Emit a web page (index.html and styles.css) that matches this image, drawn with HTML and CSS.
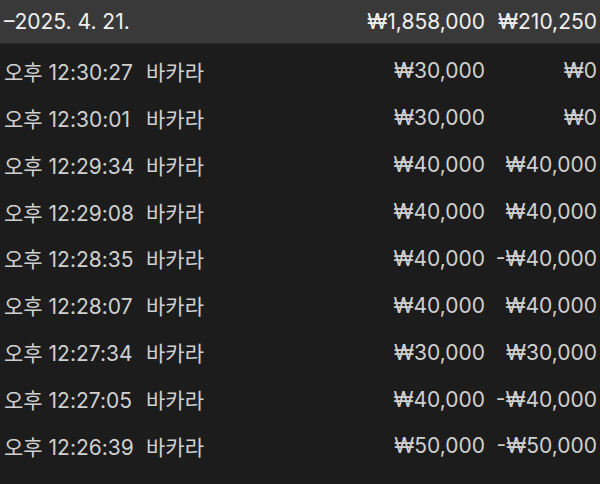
FILE: index.html
```html
<!DOCTYPE html>
<html lang="ko">
<head>
<meta charset="utf-8">
<link rel="stylesheet" href="styles.css">
</head>
<body>
<div class="list">
  <div class="head">
    <span class="date">–2025. 4. 21.</span>
    <span class="amt">₩1,858,000</span>
    <span class="res">₩210,250</span>
  </div>
  <div class="row"><span class="time">오후 12:30:27</span><span class="game">바카라</span><span class="amt">₩30,000</span><span class="res">₩0</span></div>
  <div class="row"><span class="time">오후 12:30:01</span><span class="game">바카라</span><span class="amt">₩30,000</span><span class="res">₩0</span></div>
  <div class="row"><span class="time">오후 12:29:34</span><span class="game">바카라</span><span class="amt">₩40,000</span><span class="res">₩40,000</span></div>
  <div class="row"><span class="time">오후 12:29:08</span><span class="game">바카라</span><span class="amt">₩40,000</span><span class="res">₩40,000</span></div>
  <div class="row"><span class="time">오후 12:28:35</span><span class="game">바카라</span><span class="amt">₩40,000</span><span class="res">-₩40,000</span></div>
  <div class="row"><span class="time">오후 12:28:07</span><span class="game">바카라</span><span class="amt">₩40,000</span><span class="res">₩40,000</span></div>
  <div class="row"><span class="time">오후 12:27:34</span><span class="game">바카라</span><span class="amt">₩30,000</span><span class="res">₩30,000</span></div>
  <div class="row"><span class="time">오후 12:27:05</span><span class="game">바카라</span><span class="amt">₩40,000</span><span class="res">-₩40,000</span></div>
  <div class="row"><span class="time">오후 12:26:39</span><span class="game">바카라</span><span class="amt">₩50,000</span><span class="res">-₩50,000</span></div>
  <div class="row"><span class="time">오후 12:26:10</span><span class="game">바카라</span><span class="amt">₩40,000</span><span class="res">₩40,000</span></div>
</div>
</body>
</html>
```
FILE: styles.css
```css
html, body {
  margin: 0;
  padding: 0;
  background: #1c1c1c;
  overflow: hidden;
}
.list {
  width: 600px;
  font-family: "Inter", "Noto Sans CJK KR", sans-serif;
  font-size: 21px;
  color: #d0d0d0;
}
.head {
  display: flex;
  align-items: center;
  height: 44px;
  padding: 0 3px 0 4px;
  background: #393939;
  color: #efefef;
  border-bottom: 1px solid #2c2c2c;
  box-sizing: border-box;
}
.row {
  display: flex;
  align-items: center;
  height: 46.875px;
  padding: 7px 3px 0 4px;
  box-sizing: border-box;
}
.time {
  width: 142px;
  white-space: nowrap;
}
.amt {
  margin-left: auto;
  text-align: right;
}
.res {
  width: 112px;
  text-align: right;
}
```
